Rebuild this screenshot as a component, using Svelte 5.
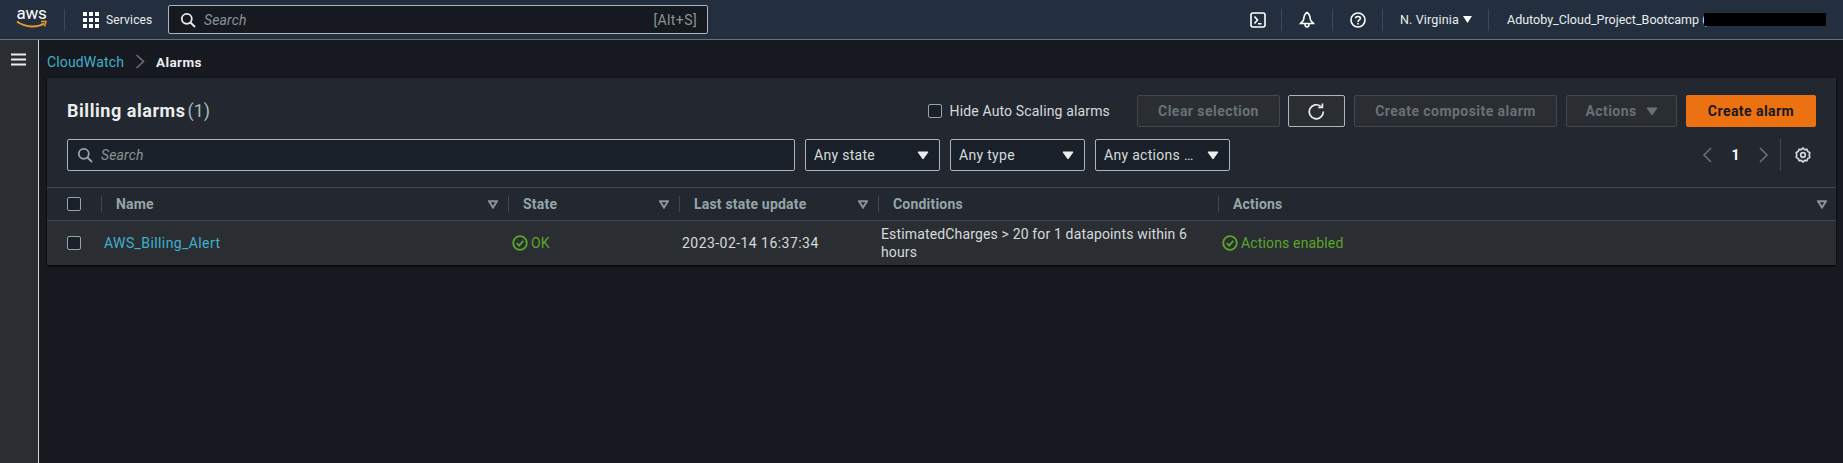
<script>
	const columns = [
		{ name: 'Name', sort: true },
		{ name: 'State', sort: true },
		{ name: 'Last state update', sort: true },
		{ name: 'Conditions', sort: false },
		{ name: 'Actions', sort: true }
	];
	const filters = ['Any state', 'Any type', 'Any actions …'];
</script>

{#snippet caret()}
	<svg class="caret" width="12" height="9" viewBox="0 0 12 9"><path d="M1 1h10L6 8z" fill="currentColor" stroke="currentColor" /></svg>
{/snippet}

{#snippet okIcon()}
	<svg width="16" height="16" viewBox="0 0 16 16" fill="none" stroke="#5ba529" stroke-width="1.8">
		<circle cx="8" cy="8" r="6.8" />
		<path d="M4.8 8.2 7.2 10.6 11.2 5.8" />
	</svg>
{/snippet}

<div class="page">
	<header class="topbar">
		<div class="logo">
			<span class="aws">aws</span>
			<svg width="31" height="9" viewBox="0 0 31 9" fill="none"><path d="M1 1.500C9 7.500 21 8 28 3.500" stroke="#ec9a26" stroke-width="2" /><path d="M25 1.500 30 1.500 28.500 6.500" stroke="#ec9a26" stroke-width="1.500" /></svg>
		</div>
		<span class="vr logo-rule"></span>
		<svg class="grid-icon" width="16" height="16" viewBox="0 0 16 16" fill="#fff">
			{#each [0, 6, 12] as y}
				{#each [0, 6, 12] as x}
					<rect {x} {y} width="4" height="4" />
				{/each}
			{/each}
		</svg>
		<span class="services">Services</span>
		<div class="global-search">
			<svg width="16" height="16" viewBox="0 0 16 16" fill="none" stroke="#eaeded" stroke-width="1.800"><circle cx="6.800" cy="6.800" r="5" /><path d="M10.500 10.500 15 15" /></svg>
			<span class="placeholder">Search</span>
			<span class="shortcut">[Alt+S]</span>
		</div>
		<div class="top-right">
			<svg class="term" width="16" height="16" viewBox="0 0 16 16" fill="none" stroke="#fff" stroke-width="1.600"><rect x="1" y="1" width="14" height="14" rx="2" /><path d="M4.500 4.500 7.500 8 4.500 11.500M8 11.800h3.500" /></svg>
			<span class="vr"></span>
			<svg class="bell" width="16" height="17" viewBox="0 0 16 17" fill="none" stroke="#fff" stroke-width="1.600"><path d="M8 1.500C5 3 5 6 4.600 8.500 4.300 10.500 2.600 11 1.500 12.500h13C13.400 11 11.700 10.500 11.400 8.500 11 6 11 3 8 1.500z" /><path d="M6 13c0 4 4 4 4 0" /></svg>
			<span class="vr"></span>
			<svg class="help" width="16" height="16" viewBox="0 0 16 16" fill="none" stroke="#fff" stroke-width="1.600"><circle cx="8" cy="8" r="7" /><path d="M5.600 6.200C5.800 3.800 10.400 3.900 10.400 6.300 10.400 8 8 8 8 10" /><path d="M8 11v1.500" /></svg>
			<span class="vr"></span>
			<span class="region">N. Virginia</span>
			<svg class="region-caret" width="9" height="7" viewBox="0 0 9 7"><path d="M0 0h9L4.500 7z" fill="#fff" /></svg>
			<span class="vr"></span>
			<span class="account">Adutoby_Cloud_Project_Bootcamp (</span>
			<span class="redact"></span>
		</div>
	</header>

	<div class="body">
		<aside class="sidebar">
			<svg width="15" height="13" viewBox="0 0 15 13" fill="#eaeded"><rect width="15" height="2" y="0.500" /><rect width="15" height="2" y="5.500" /><rect width="15" height="2" y="10.500" /></svg>
		</aside>

		<main class="content">
			<nav class="crumbs">
				<a href="#cw">CloudWatch</a>
				<svg width="10" height="15" viewBox="0 0 10 15" fill="none" stroke="#687078" stroke-width="1.600"><path d="M1.500 1l7 6.500-7 6.500" /></svg>
				<strong>Alarms</strong>
			</nav>

			<section class="panel">
				<div class="panel-head">
					<div class="row-one">
						<h1>Billing alarms <span>(1)</span></h1>
						<label class="hide-as"><span class="check"></span>Hide Auto Scaling alarms</label>
						<button class="btn off clear">Clear selection</button>
						<button class="btn refresh" aria-label="Refresh">
							<svg width="17" height="17" viewBox="0 0 17 17" fill="none" stroke="#eaeded" stroke-width="1.700"><path d="M12.800 3.400A7 7 0 1 0 15.300 8.500" /><path d="M14.400 0.500V4.400H10.300" /></svg>
						</button>
						<button class="btn off composite">Create composite alarm</button>
						<button class="btn off actions">Actions {@render caret()}</button>
						<button class="btn primary">Create alarm</button>
					</div>
					<div class="row-two">
						<div class="search">
							<svg width="16" height="16" viewBox="0 0 16 16" fill="none" stroke="#95a5a6" stroke-width="1.800"><circle cx="6.800" cy="6.800" r="5" /><path d="M10.500 10.500 15 15" /></svg>
							<span class="placeholder">Search</span>
						</div>
						{#each filters as filter}
							<div class="select"><span>{filter}</span>{@render caret()}</div>
						{/each}
						<div class="pager">
							<svg width="10" height="16" viewBox="0 0 10 16" fill="none" stroke="#687078" stroke-width="1.600"><path d="M9 1 2 8l7 7" /></svg>
							<b>1</b>
							<svg width="10" height="16" viewBox="0 0 10 16" fill="none" stroke="#687078" stroke-width="1.600"><path d="M1 1l7 7-7 7" /></svg>
							<span class="vr pager-rule"></span>
							<svg class="gear" width="16" height="16" viewBox="0 0 16 16" fill="none" stroke="#d5dbdb" stroke-width="1.700"><path d="M8 1l1.700 1.600 2.200-.1.900 2 1.900 1.100-.4 2.400.4 2.400-1.900 1.100-.9 2-2.200-.1L8 15l-1.700-1.600-2.200.1-.9-2-1.900-1.100.4-2.400-.4-2.400 1.900-1.100.9-2 2.200.1z" /><circle cx="8" cy="8" r="2.300" /></svg>
						</div>
					</div>
				</div>

				<div class="table-row table-head">
					<div class="cell select-cell"><span class="check"></span></div>
					{#each columns as col}
						<div class="cell">
							<span>{col.name}</span>
							{#if col.sort}
								<svg class="sort" width="10" height="9" viewBox="0 0 10 9" fill="none" stroke="#879596" stroke-width="2"><path d="M1 1.200h8L5 7.500z" /></svg>
							{/if}
						</div>
					{/each}
				</div>

				<div class="table-row table-body">
					<div class="cell select-cell"><span class="check"></span></div>
					<div class="cell"><a class="alarm" href="#alarm">AWS_Billing_Alert</a></div>
					<div class="cell ok">{@render okIcon()}OK</div>
					<div class="cell date">2023-02-14 16:37:34</div>
					<div class="cell">EstimatedCharges &gt; 20 for 1 datapoints within 6 hours</div>
					<div class="cell ok">{@render okIcon()}Actions enabled</div>
				</div>
			</section>
		</main>
	</div>
</div>

<style>
	:global(body) {
		background: #16191f;
	}

	.page {
		height: 463px;
		display: flex;
		flex-direction: column;
		font-family: Roboto, sans-serif;
		font-size: 14px;
		letter-spacing: 0.15px;
		color: #d5dbdb;
		overflow: hidden;
	}

	svg {
		flex: none;
		display: block;
	}

	.vr {
		width: 1px;
		height: 22px;
		background: #414750;
		flex: none;
	}

	/* top bar */
	.topbar {
		height: 39px;
		flex: none;
		display: flex;
		align-items: center;
		background: #232f3e;
		border-bottom: 1px solid #687078;
		padding-left: 16px;
	}

	.logo {
		width: 31px;
		display: flex;
		flex-direction: column;
		align-items: center;
		line-height: 13px;
	}

	.aws {
		font-size: 17px;
		color: #fff;
		letter-spacing: -0.3px;
		margin-top: -3px;
	}

	.logo-rule {
		margin-left: 17px;
	}

	.grid-icon {
		margin-left: 18px;
	}

	.services {
		margin-left: 7px;
		width: 46px;
		font-size: 12px;
		color: #eaeded;
	}

	.global-search {
		margin-left: 16px;
		width: 540px;
		height: 29px;
		box-sizing: border-box;
		display: flex;
		align-items: center;
		gap: 8px;
		padding: 0 10px 0 11px;
		background: #16191f;
		border: 1px solid #aab7b8;
		border-radius: 2px;
	}

	.placeholder {
		font-style: italic;
		color: #879596;
	}

	.shortcut {
		margin-left: auto;
		color: #879596;
		letter-spacing: 0.4px;
	}

	.top-right {
		margin-left: auto;
		display: flex;
		align-items: center;
		color: #eaeded;
		font-size: 12.5px;
		padding-right: 17px;
	}

	.term {
		margin-right: 15px;
	}

	.bell {
		margin: 0 17px;
	}

	.help {
		margin: 0 16px 0 17px;
	}

	.region {
		margin-left: 17px;
		width: 57px;
		white-space: nowrap;
	}

	.region-caret {
		margin: 0 16px 0 6px;
	}

	.account {
		margin-left: 18px;
		white-space: nowrap;
		width: 197px;
		letter-spacing: 0;
	}

	.redact {
		width: 122px;
		height: 13px;
		background: #000;
	}

	/* page body */
	.body {
		flex: 1;
		display: flex;
		min-height: 0;
	}

	.sidebar {
		width: 38px;
		flex: none;
		background: #2a2e33;
		border-right: 1px solid #d5dbdb;
		display: flex;
		justify-content: center;
		padding-top: 13px;
	}

	.sidebar svg {
		margin-right: 2px;
	}

	.content {
		flex: 1;
		min-width: 0;
		padding: 0 7px 0 8px;
	}

	.crumbs {
		height: 38px;
		padding-top: 5px;
		box-sizing: border-box;
		display: flex;
		align-items: center;
		gap: 11px;
	}

	a {
		color: #3fb0cd;
		text-decoration: none;
	}

	.crumbs strong {
		font-size: 13.5px;
		font-weight: 700;
		color: #eaeded;
		letter-spacing: 0.4px;
	}

	.panel {
		background: #232730;
		box-shadow: 0 1px 2px #000;
	}

	.panel-head {
		padding: 17px 20px 16px;
		display: flex;
		flex-direction: column;
		gap: 12px;
	}

	.row-one,
	.row-two {
		height: 32px;
		display: flex;
		align-items: center;
	}

	h1 {
		margin: -2px 0 0;
		font-size: 18px;
		font-weight: 700;
		letter-spacing: 0.55px;
		color: #eaeded;
	}

	h1 span {
		font-weight: 400;
		letter-spacing: 0;
		margin-left: -3px;
		color: #aab7b8;
	}

	.hide-as {
		margin-left: auto;
		margin-right: 27px;
		display: flex;
		align-items: center;
		gap: 8px;
		color: #d5dbdb;
	}

	.check {
		width: 14px;
		height: 14px;
		box-sizing: border-box;
		display: block;
		background: #1a2029;
		border: 1px solid #95a5a6;
		border-radius: 2px;
	}

	.btn {
		height: 32px;
		box-sizing: border-box;
		font: 700 14px Roboto, sans-serif;
		letter-spacing: 0.45px;
		border-radius: 2px;
		padding: 0;
		display: flex;
		align-items: center;
		justify-content: center;
	}

	.off {
		background: #2a2e33;
		border: 1px solid #414750;
		color: #687078;
	}

	.clear {
		width: 143px;
	}

	.composite {
		margin-left: 9px;
		width: 203px;
	}

	.actions {
		margin-left: 9px;
		width: 111px;
		gap: 9px;
	}

	.refresh {
		margin-left: 8px;
		width: 57px;
		background: #2a2e33;
		border: 1px solid #aab7b8;
	}

	.primary {
		margin-left: 9px;
		width: 130px;
		background: #ec7211;
		border: 0;
		color: #16191f;
	}

	.search {
		width: 728px;
		height: 32px;
		box-sizing: border-box;
		display: flex;
		align-items: center;
		gap: 8px;
		padding-left: 9px;
		background: #1a2029;
		border: 1px solid #aab7b8;
		border-radius: 2px;
		margin-right: 10px;
	}

	.select {
		width: 135px;
		height: 32px;
		box-sizing: border-box;
		display: flex;
		align-items: center;
		justify-content: space-between;
		padding: 0 10px 0 8px;
		background: #1a2029;
		border: 1px solid #aab7b8;
		border-radius: 2px;
		margin-right: 10px;
		color: #d5dbdb;
		letter-spacing: 0.3px;
	}

	.caret {
		color: #eaeded;
	}

	.actions .caret {
		color: #687078;
	}

	.pager {
		margin-left: auto;
		display: flex;
		align-items: center;
		height: 32px;
	}

	.pager b {
		width: 47px;
		text-align: center;
		color: #fff;
		font-weight: 700;
	}

	.pager-rule {
		height: 32px;
		margin-left: 11px;
		margin-right: 14px;
	}

	.gear {
		margin-right: 5px;
	}

	/* table */
	.table-row {
		display: grid;
		grid-template-columns: 54px 407px 171px 199px 340px 1fr;
		border-top: 1px solid #414750;
	}

	.cell {
		display: flex;
		align-items: center;
	}

	.table-head {
		height: 33px;
		box-sizing: border-box;
		color: #95a5a6;
		font-weight: 700;
		letter-spacing: 0.2px;
	}

	.table-head .cell {
		padding-left: 14px;
		padding-right: 10px;
		height: 16px;
		align-self: center;
		justify-content: space-between;
		border-left: 1px solid #414750;
	}

	.table-head .select-cell {
		border-left: 0;
		padding: 0 0 0 20px;
	}

	.table-head .cell:last-child {
		padding-right: 9px;
	}

	.table-body {
		height: 45px;
		box-sizing: border-box;
		background: #2a2e33;
		color: #d5dbdb;
		line-height: 18px;
	}

	.table-body .cell {
		padding-left: 3px;
		padding-right: 20px;
	}

	.table-body .select-cell {
		padding-left: 20px;
		padding-right: 0;
	}

	.alarm {
		letter-spacing: 0.4px;
	}

	.table-body .date {
		letter-spacing: 0.45px;
	}

	.table-body .ok {
		color: #5ba529;
		gap: 3px;
		padding-left: 4px;
	}
</style>
